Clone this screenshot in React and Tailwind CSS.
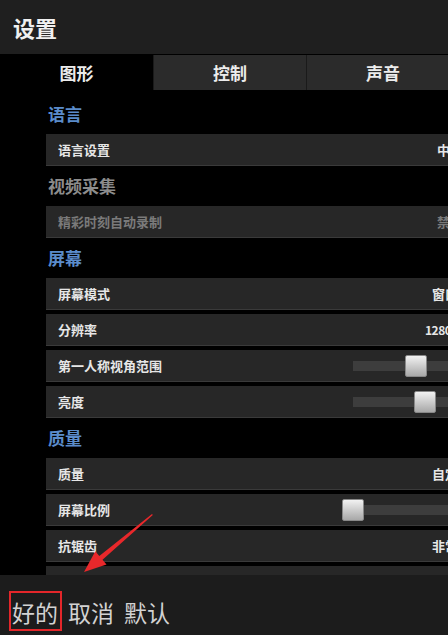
import React from 'react';

const tabs = [
  { id: 'graphics', label: '图形', active: true },
  { id: 'control', label: '控制' },
  { id: 'sound', label: '声音' },
];

const sections = [
  {
    title: '语言',
    rows: [{ label: '语言设置', value: '中文', labelW: 'w-[379px]' }],
  },
  {
    title: '视频采集',
    muted: true,
    rows: [{ label: '精彩时刻自动录制', value: '禁用', labelW: 'w-[379px]', disabled: true }],
  },
  {
    title: '屏幕',
    rows: [
      { label: '屏幕模式', value: '窗口化', labelW: 'w-[374px]' },
      { label: '分辨率', value: '1280×720', labelW: 'w-[367px]', small: true },
      { label: '第一人称视角范围', slider: 'left-[52px]', labelW: 'w-[295px]' },
      { label: '亮度', slider: 'left-[61px]', labelW: 'w-[295px]' },
    ],
  },
  {
    title: '质量',
    rows: [
      { label: '质量', value: '自定义', labelW: 'w-[374px]' },
      { label: '屏幕比例', slider: 'left-0', labelW: 'w-[284px]' },
      { label: '抗锯齿', value: '非常高', labelW: 'w-[374px]' },
      { label: '阴影', value: '高', labelW: 'w-[374px]' },
    ],
  },
];

function Row({ row }) {
  return (
    <div className="flex h-8 items-center overflow-hidden border-b border-[#3a3a3a] bg-[#272727] pl-3 whitespace-nowrap">
      <div
        className={`${row.labelW} shrink-0 text-[13px] font-bold ${
          row.disabled ? 'text-[#7a7a7a]' : 'text-[#e6e6e6]'
        }`}
      >
        {row.label}
      </div>
      {row.slider ? (
        <div className="relative h-[10px] w-[160px] shrink-0 bg-[#3d3d3d]">
          <div
            className={`absolute top-1/2 ${row.slider} h-[22px] w-[22px] -translate-y-1/2 rounded-[2px] border border-[#888] bg-gradient-to-b from-[#f2f2f2] to-[#a8a8a8]`}
          />
        </div>
      ) : (
        <div
          className={`shrink-0 font-bold ${row.disabled ? 'text-[#7a7a7a]' : 'text-[#e6e6e6]'} ${
            row.small ? 'text-[12px] tracking-[-0.5px]' : 'text-[13px]'
          }`}
        >
          {row.value}
        </div>
      )}
    </div>
  );
}

export default function App() {
  return (
    <div
      className="relative flex h-[635px] w-[448px] flex-col overflow-hidden bg-black"
      style={{ fontFamily: '"Noto Sans CJK SC", "Noto Sans", sans-serif' }}
    >
      {/* Title */}
      <div className="flex h-[54px] shrink-0 items-center bg-[#1f1f1f] pl-[13px]">
        <span className="text-[22px] font-bold text-[#f0f0f0]">设置</span>
      </div>

      {/* Tabs */}
      <div className="flex h-[36px] shrink-0 border-t border-black">
        {tabs.map((t) => (
          <div
            key={t.id}
            className={`flex w-[153px] shrink-0 items-center justify-center text-[17px] font-bold text-[#ececec] ${
              t.active ? 'bg-black' : 'border-l border-[#1a1a1a] bg-[#2b2b2b]'
            }`}
          >
            {t.label}
          </div>
        ))}
      </div>

      {/* Settings list */}
      <div className="min-h-0 flex-1 overflow-hidden pt-1 pl-[46px]">
        {sections.map((s) => (
          <div key={s.title}>
            <div
              className={`flex h-10 items-center pl-[2px] text-[17px] font-bold ${
                s.muted ? 'text-[#8c8c8c]' : 'text-[#5b8ccb]'
              }`}
            >
              {s.title}
            </div>
            <div className="flex flex-col gap-[4px]">
              {s.rows.map((r) => (
                <Row key={r.label} row={r} />
              ))}
            </div>
          </div>
        ))}
      </div>

      {/* Bottom bar */}
      <div className="flex h-[60px] shrink-0 items-center gap-[10px] bg-[#1c1c1c] pt-[14px] pl-[12px] text-[23px] text-[#d2d2d2]">
        <span className="relative">
          好的
          <span className="absolute -top-[4px] -right-[4px] -bottom-[2px] -left-[3px] border-2 border-[#e3262a]" />
        </span>
        <span>取消</span>
        <span>默认</span>
      </div>

      {/* Red annotation arrow */}
      <svg className="pointer-events-none absolute inset-0" width="448" height="635" viewBox="0 0 448 635">
        <polygon
          points="152,514 152.8,515 102.5,559.8 106.5,564.5 84,572 95.3,551.3 99.3,556"
          fill="#e8282b"
        />
      </svg>
    </div>
  );
}
